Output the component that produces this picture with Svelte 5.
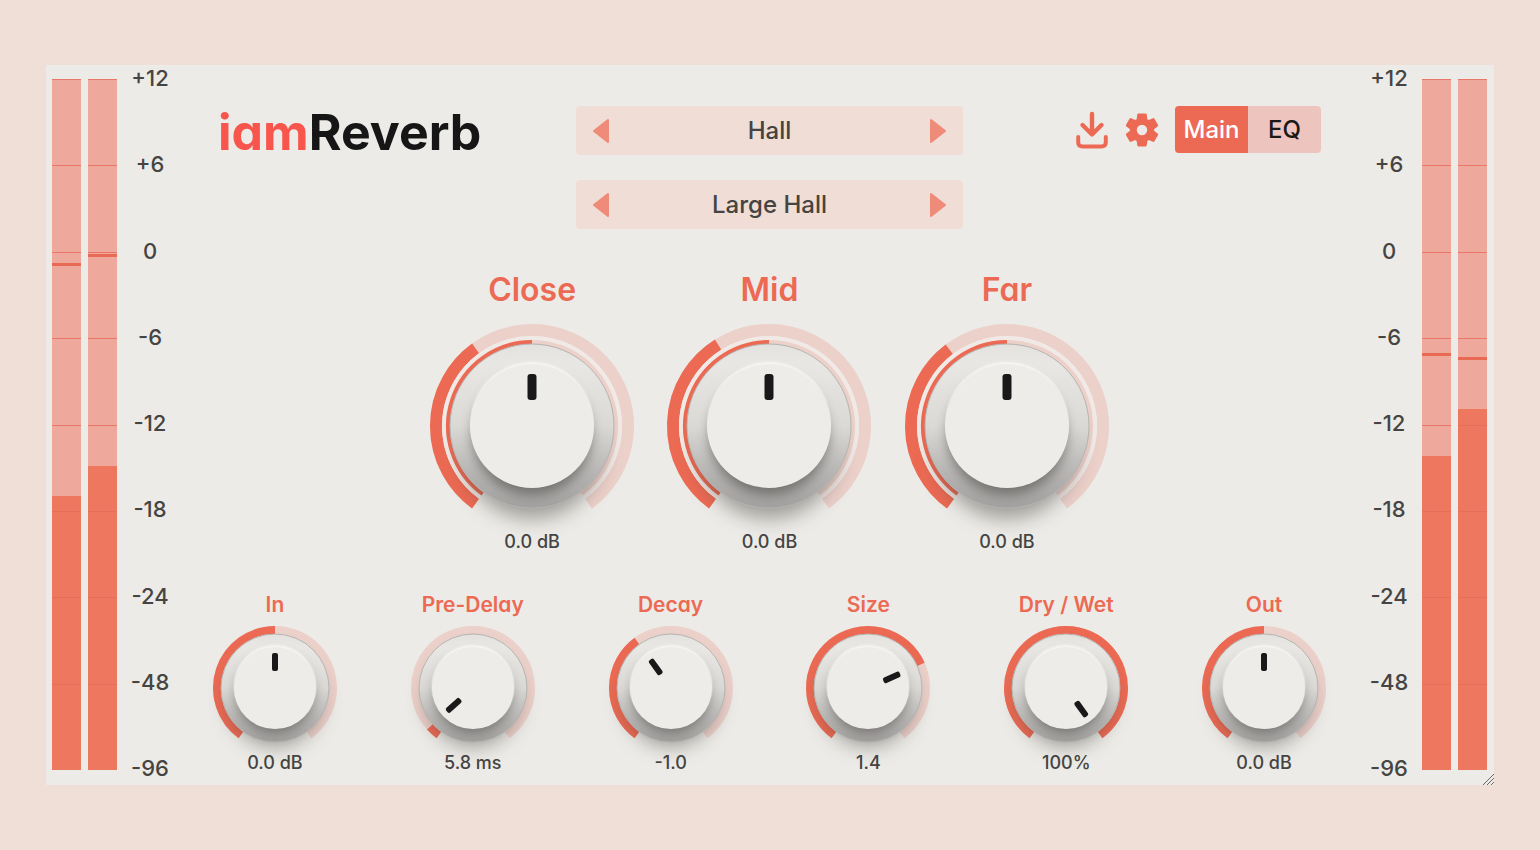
<script>
  const marks = ['+12', '+6', '0', '-6', '-12', '-18', '-24', '-48', '-96'];
  const inputMeter = [
    { level: 39.6, peak: 26.6 },
    { level: 44, peak: 25.3 }
  ];
  const outputMeter = [
    { level: 45.4, peak: 39.6 },
    { level: 52.2, peak: 40.2 }
  ];

  const SWEEP = 144;

  let mics = $state([
    { id: 'close', name: 'Close', text: '0.0 dB', angle: 0, signal: -36 },
    { id: 'mid', name: 'Mid', text: '0.0 dB', angle: 0, signal: -32 },
    { id: 'far', name: 'Far', text: '0.0 dB', angle: 0, signal: -37 }
  ]);
  let params = $state([
    { id: 'in', name: 'In', text: '0.0 dB', angle: 0 },
    { id: 'predelay', name: 'Pre-Delay', text: '5.8 ms', angle: -132 },
    { id: 'decay', name: 'Decay', text: '-1.0', angle: -36 },
    { id: 'size', name: 'Size', text: '1.4', angle: 66 },
    { id: 'drywet', name: 'Dry / Wet', text: '100%', angle: 144 },
    { id: 'out', name: 'Out', text: '0.0 dB', angle: 0 }
  ]);
  let tab = $state('Main');

  function point(r, deg) {
    const a = (deg * Math.PI) / 180;
    return `${(r * Math.sin(a)).toFixed(2)} ${(-r * Math.cos(a)).toFixed(2)}`;
  }

  function arc(r, from, to) {
    return `M${point(r, from)}A${r} ${r} 0 ${to - from > 180 ? 1 : 0} 1 ${point(r, to)}`;
  }

  // Six-toothed gear outline with a round hole.
  const gear =
    'M' +
    [0, 60, 120, 180, 240, 300]
      .flatMap((a) => [point(11, a - 22), point(15.5, a - 13), point(15.5, a + 13), point(11, a + 22)])
      .join('L') +
    'ZM0-6.500A6.500 6.500 0 1 0 0 6.500A6.500 6.500 0 1 0 0-6.500Z';
</script>

{#snippet bars(channels, label)}
  <div class="bars" role="img" aria-label={label}>
    {#each channels as ch}
      <div class="bar">
        <div class="level" style="height: {ch.level}%"></div>
        {#each marks.slice(0, -1) as _, i}
          <div class="tick" style="top: {i * 12.5}%"></div>
        {/each}
        <div class="peak" style="top: {ch.peak}%"></div>
      </div>
    {/each}
  </div>
{/snippet}

{#snippet scale()}
  <div class="scale">
    {#each marks as m}<span>{m}</span>{/each}
  </div>
{/snippet}

{#snippet picker(label, value)}
  <div class="picker">
    <button aria-label="Previous {label}">
      <svg width="18" height="26" viewBox="0 0 18 26"><path d="M16 2v22L2 13z" /></svg>
    </button>
    <select aria-label={label}><option>{value}</option></select>
    <button aria-label="Next {label}">
      <svg width="18" height="26" viewBox="0 0 18 26"><path d="M2 2v22l14-11z" /></svg>
    </button>
  </div>
{/snippet}

<main class="page">
  <section class="panel">
    {@render bars(inputMeter, 'Input level')}
    {@render scale()}

    <div class="body">
      <header>
        <h1><span>iam</span>Reverb</h1>
        <div class="pickers">
          {@render picker('category', 'Hall')}
          {@render picker('preset', 'Large Hall')}
        </div>
        <div class="tools">
          <button class="icon" aria-label="Download">
            <svg width="34" height="38" viewBox="0 0 34 38" fill="none" stroke="currentColor" stroke-width="4.4" stroke-linecap="round" stroke-linejoin="round">
              <path d="M17 3v20M7.500 14l9.500 9.500L26.500 14" />
              <path d="M3.200 26v5q0 4.500 4.500 4.500h18.600q4.500 0 4.500-4.500v-5" stroke-width="4" />
            </svg>
          </button>
          <button class="icon" aria-label="Settings">
            <svg width="34" height="34" viewBox="-17 -17 34 34" fill="currentColor" stroke="currentColor" stroke-width="2.6" stroke-linejoin="round">
              <path fill-rule="evenodd" d={gear} />
            </svg>
          </button>
          <div class="tabs">
            {#each ['Main', 'EQ'] as t}
              <button class:active={tab === t} aria-pressed={tab === t} onclick={() => (tab = t)}>{t}</button>
            {/each}
          </div>
        </div>
      </header>

      <div class="mics">
        {#each mics as k (k.id)}
          <div class="knob large">
            <label for={k.id}>{k.name}</label>
            <div class="dial">
              <svg viewBox="-102 -102 204 204" aria-hidden="true">
                <path class="track" d={arc(96, -SWEEP, SWEEP)} stroke-width="12" />
                <path class="value" d={arc(96, -SWEEP, k.signal)} stroke-width="12" />
                <path class="gap" d={arc(88, -SWEEP, SWEEP)} stroke-width="4" />
                <path class="track" d={arc(84, -SWEEP, SWEEP)} stroke-width="4" />
                {#if k.angle > -SWEEP}<path class="value" d={arc(84, -SWEEP, k.angle)} stroke-width="4" />{/if}
                <circle class="cast" cy="22" r="70" />
                <circle r="82" fill="url(#base)" stroke="#b5b3b0" stroke-width="1" />
                <circle class="shade" cy="9" r="60" />
                <circle class="shine" cy="-3" r="61" />
                <circle class="cap" cy="0" r="62" />
                <rect class="hand" x="-4.500" y="-52" width="9" height="26" rx="3" transform="rotate({k.angle})" />
              </svg>
              <input id={k.id} type="range" min={-SWEEP} max={SWEEP} bind:value={k.angle} />
            </div>
            <output for={k.id}>{k.text}</output>
          </div>
        {/each}
      </div>

      <div class="params">
        {#each params as k (k.id)}
          <div class="knob">
            <label for={k.id}>{k.name}</label>
            <div class="dial">
              <svg viewBox="-62 -62 124 124" aria-hidden="true">
                <path class="track" d={arc(58, -SWEEP, SWEEP)} stroke-width="8" />
                {#if k.angle > -SWEEP}<path class="value" d={arc(58, -SWEEP, k.angle)} stroke-width="8" />{/if}
                <circle class="cast" cy="12" r="46" />
                <circle r="54" fill="url(#base)" stroke="#b5b3b0" stroke-width="1" />
                <circle class="shade" cy="6" r="39" />
                <circle class="shine" cy="-2" r="41" />
                <circle class="cap" cy="0" r="41" />
                <rect class="hand" x="-3" y="-35" width="6" height="18" rx="2" transform="rotate({k.angle})" />
              </svg>
              <input id={k.id} type="range" min={-SWEEP} max={SWEEP} bind:value={k.angle} />
            </div>
            <output for={k.id}>{k.text}</output>
          </div>
        {/each}
      </div>
    </div>

    {@render scale()}
    {@render bars(outputMeter, 'Output level')}

    <svg class="grip" width="12" height="12" viewBox="0 0 12 12" aria-hidden="true">
      <path d="M1 12L12 1M5 12l7-7M9 12l3-3" />
    </svg>
  </section>

  <svg class="defs" width="0" height="0" aria-hidden="true">
    <linearGradient id="base" x1="0" y1="0" x2="0" y2="1">
      <stop offset="0" stop-color="#e3e2de" />
      <stop offset=".12" stop-color="#e8e7e4" />
      <stop offset=".5" stop-color="#dad9d6" />
      <stop offset=".8" stop-color="#b6b4b2" />
      <stop offset="1" stop-color="#a3a19f" />
    </linearGradient>
  </svg>
</main>

<style>
  :global(body) {
    margin: 0;
    background: #f0dfd7;
  }
  .page {
    --accent: #ec6a53;
    box-sizing: border-box;
    min-height: 100vh;
    padding: 65px 46px;
    display: grid;
    font-family: Inter, 'Liberation Sans', sans-serif;
    font-weight: 500;
    color: #454442;
  }
  button,
  select {
    font: inherit;
    color: inherit;
    border: 0;
    margin: 0;
    padding: 0;
    background: none;
    cursor: pointer;
  }
  svg {
    display: block;
  }
  .panel {
    position: relative;
    display: flex;
    gap: 7px;
    padding: 0 7px 0 6px;
    background: #ecebe7;
  }
  .bars {
    display: flex;
    gap: 7px;
    margin: 14px 0 15px;
  }
  .bar {
    position: relative;
    width: 29px;
    background: #eea99c;
  }
  .level,
  .tick,
  .peak {
    position: absolute;
    left: 0;
    right: 0;
  }
  .level {
    bottom: 0;
    background: #ee775f;
  }
  .tick {
    height: 1px;
    background: #e66a5a;
    opacity: 0.8;
  }
  .peak {
    height: 3px;
    background: #e96a54;
  }
  .scale {
    width: 52px;
    margin: 1px 0 5px;
    display: flex;
    flex-direction: column;
    justify-content: space-between;
    text-align: center;
    font-size: 22px;
    line-height: 24px;
  }
  .body {
    flex: 1;
    margin: 0 -7px;
    padding: 41px 0 11px;
    display: flex;
    flex-direction: column;
    justify-content: space-between;
  }
  header {
    display: grid;
    grid-template-columns: 1fr 387px 1fr;
    padding: 0 42px;
    margin-bottom: 2px;
  }
  h1,
  .knob label {
    font-feature-settings: 'cv11';
  }
  h1 {
    margin: 0;
    font-size: 50px;
    line-height: 52px;
    font-weight: 700;
    color: #161616;
  }
  h1 span {
    color: #f8564c;
  }
  .pickers {
    display: grid;
    gap: 25px;
  }
  .picker {
    display: flex;
    align-items: center;
    height: 49px;
    padding: 0 16px;
    border-radius: 4px;
    background: #efddd6;
    font-size: 24px;
  }
  .picker svg {
    fill: #ef8b79;
    stroke: #ef8b79;
    stroke-width: 2;
    stroke-linejoin: round;
  }
  .picker select {
    flex: 1;
    appearance: none;
    text-align: center;
    text-align-last: center;
  }
  .tools {
    display: flex;
    justify-content: flex-end;
    align-items: center;
    height: 47px;
    gap: 16px;
  }
  .icon {
    color: var(--accent);
  }
  .tabs {
    display: flex;
    border-radius: 4px;
    overflow: hidden;
    background: #eec5be;
    font-size: 24px;
    color: #1b1918;
  }
  .tabs button {
    width: 73px;
    height: 47px;
  }
  .tabs .active {
    background: var(--accent);
    color: #fff;
  }
  .mics {
    display: grid;
    grid-template-columns: repeat(3, 1fr);
    width: 60%;
    margin: 0 auto;
  }
  .params {
    display: grid;
    grid-template-columns: repeat(6, 1fr);
  }
  .knob {
    display: flex;
    flex-direction: column;
    align-items: center;
  }
  .knob label {
    font-size: 21px;
    line-height: 24px;
    font-weight: 600;
    color: var(--accent);
    margin-bottom: 9px;
  }
  .knob.large label {
    font-size: 32px;
    line-height: 36px;
    margin-bottom: 16px;
  }
  .dial {
    position: relative;
    width: 124px;
    height: 124px;
    margin-bottom: 2px;
  }
  .large .dial {
    width: 204px;
    height: 204px;
    margin-bottom: 3px;
  }
  .dial svg {
    width: 100%;
    height: 100%;
    overflow: visible;
  }
  .dial input {
    position: absolute;
    inset: 0;
    width: 100%;
    height: 100%;
    margin: 0;
    opacity: 0;
    cursor: grab;
  }
  .track,
  .value,
  .gap {
    fill: none;
  }
  .track {
    stroke: #ecd0ca;
  }
  .value {
    stroke: var(--accent);
  }
  .gap {
    stroke: #f1e9e5;
  }
  .cast {
    fill: rgb(60 55 50 / 0.45);
    filter: blur(10px);
  }
  .shade {
    fill: rgb(60 58 56 / 0.5);
    filter: blur(6px);
  }
  .shine {
    fill: #f7f7f5;
    filter: blur(1px);
  }
  .cap {
    fill: #edece9;
  }
  .hand {
    fill: #191919;
  }
  output {
    font-size: 18px;
    line-height: 22px;
  }
  .grip {
    position: absolute;
    right: 0;
    bottom: 0;
    stroke: #6b6966;
    fill: none;
  }
  .defs {
    position: absolute;
  }
</style>
